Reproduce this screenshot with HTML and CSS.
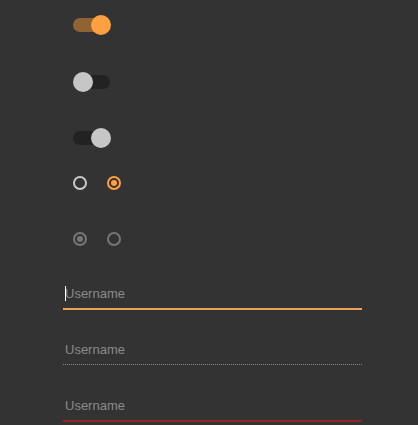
FILE: index.html
```html
<!DOCTYPE html>
<html>
<head>
<meta charset="utf-8">
<link rel="stylesheet" href="styles.css">
</head>
<body>
<div class="page">
  <div class="controls">
    <div class="switch switch-on"><span class="track"></span><span class="knob"></span></div>
    <div class="switch switch-off"><span class="track"></span><span class="knob"></span></div>
    <div class="switch switch-off-right"><span class="track"></span><span class="knob"></span></div>
    <div class="radio-row row-first">
      <span class="radio"></span>
      <span class="radio radio-checked"><span class="dot"></span></span>
    </div>
    <div class="radio-row row-second">
      <span class="radio radio-disabled"><span class="dot"></span></span>
      <span class="radio radio-disabled"></span>
    </div>
  </div>
  <div class="fields">
    <div class="field field-focus">
      <input class="field-input input-focus" placeholder="Username">
      <span class="caret"></span>
    </div>
    <div class="field field-disabled">
      <input class="field-input input-disabled" placeholder="Username">
    </div>
    <div class="field field-error">
      <input class="field-input input-error" placeholder="Username">
    </div>
  </div>
</div>
</body>
</html>
```
FILE: styles.css
```css
html, body {
  margin: 0;
  padding: 0;
  background: #333333;
  height: 100%;
}
.page {
  padding-left: 63px;
  font-family: "Liberation Sans", Arial, sans-serif;
}
.controls {
  padding-left: 10px;
  padding-top: 15px;
  display: flex;
  flex-direction: column;
}
.switch {
  position: relative;
  width: 38px;
  height: 20px;
  display: flex;
  align-items: center;
}
.switch + .switch { margin-top: 37px; }
.switch-off-right { margin-top: 36px !important; }
.track {
  width: 37px;
  height: 14px;
  border-radius: 7px;
  background: #222222;
}
.knob {
  position: absolute;
  top: 0;
  width: 20px;
  height: 20px;
  border-radius: 50%;
  background: #c6c6c6;
}
.switch-on .track { background: #8f6333; }
.switch-on .knob { right: 0; background: #ffa040; }
.switch-off .knob { left: 0; }
.switch-off-right .knob { right: 0; }

.radio-row {
  display: flex;
  gap: 20px;
}
.row-first { margin-top: 28px; }
.row-second { margin-top: 42px; }
.radio {
  box-sizing: border-box;
  width: 14px;
  height: 14px;
  border: 2px solid #c8c8c8;
  border-radius: 50%;
  display: flex;
  align-items: center;
  justify-content: center;
}
.radio-checked { border-color: #ffa040; }
.radio-checked .dot { background: #ffa040; }
.radio-disabled { border-color: #767676; }
.radio-disabled .dot { background: #767676; }
.dot {
  width: 6px;
  height: 6px;
  border-radius: 50%;
}

.fields {
  display: flex;
  flex-direction: column;
}
.field {
  position: relative;
  width: 299px;
}
.field-focus { margin-top: 39px; }
.field-disabled { margin-top: 31px; }
.field-error { margin-top: 32px; }
.field-input {
  display: block;
  box-sizing: content-box;
  width: 297px;
  height: 16px;
  line-height: 16px;
  margin: 0;
  padding: 1px 0 6px 2px;
  border: none;
  outline: none;
  background: transparent;
  font-family: "Liberation Sans", Arial, sans-serif;
  font-size: 13px;
  color: #ddd;
}
.field-input::placeholder { color: #8a8a8a; opacity: 1; }
.input-focus { border-bottom: 2px solid #f0a058; }
.input-disabled { border-bottom: 1px dotted #8a8a8a; }
.input-error { border-bottom: 2px solid #8e2626; }
.caret {
  position: absolute;
  left: 2px;
  top: 1px;
  width: 1px;
  height: 15px;
  background: #ffffff;
}
```
